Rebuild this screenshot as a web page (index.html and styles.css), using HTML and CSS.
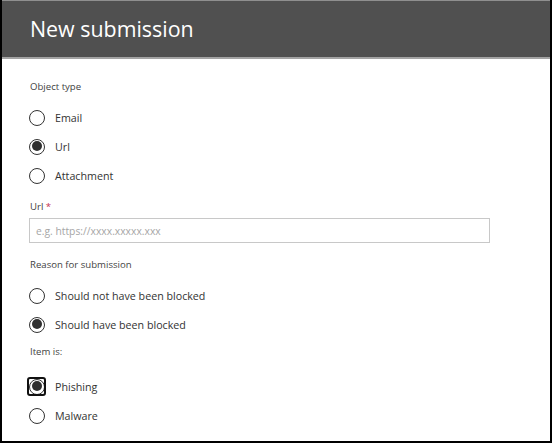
FILE: index.html
```html
<!DOCTYPE html>
<html lang="en">
<head>
<meta charset="utf-8">
<title>New submission</title>
<link rel="stylesheet" href="styles.css">
</head>
<body>
<div class="frame">
  <header class="header">
    <h1 class="title">New submission</h1>
  </header>
  <main class="content">
    <div class="label label-first">Object type</div>
    <div class="group">
      <div class="option"><span class="radio"></span><span class="option-text">Email</span></div>
      <div class="option"><span class="radio checked"></span><span class="option-text">Url</span></div>
      <div class="option"><span class="radio"></span><span class="option-text">Attachment</span></div>
    </div>
    <div class="label label-url">Url <span class="req">*</span></div>
    <div class="input"><span class="placeholder">e.g. https://xxxx.xxxxx.xxx</span></div>
    <div class="label label-reason">Reason for submission</div>
    <div class="group">
      <div class="option"><span class="radio"></span><span class="option-text">Should not have been blocked</span></div>
      <div class="option"><span class="radio checked"></span><span class="option-text">Should have been blocked</span></div>
    </div>
    <div class="label label-item">Item is:</div>
    <div class="group group-item">
      <div class="option"><span class="radio checked focused"></span><span class="option-text">Phishing</span></div>
      <div class="option"><span class="radio"></span><span class="option-text">Malware</span></div>
    </div>
  </main>
</div>
</body>
</html>
```

FILE: styles.css
```css
* { box-sizing: border-box; }
html, body { margin: 0; padding: 0; background: #ffffff; }
body { font-family: "Open Sans", "Noto Sans", sans-serif; color: #323130; }

.frame {
  width: 552px;
  height: 443px;
  border-left: 2px solid #000;
  border-right: 2px solid #000;
  border-bottom: 2px solid #000;
  overflow: hidden;
  background: #fff;
}

.header {
  height: 59px;
  background: #505050;
  border-top: 1px solid #8f8f8f;
  border-bottom: 2px solid #a3a3a3;
  display: flex;
  align-items: center;
  padding-left: 28px;
}
.title {
  margin: 0;
  font-size: 21.4px;
  font-weight: 400;
  color: #ffffff;
  line-height: 24px;
  padding-bottom: 1px;
}

.content { padding-left: 27px; }

.label {
  font-size: 9.6px;
  line-height: 16px;
  height: 16px;
  color: #3f3f3f;
  padding-left: 1px;
}
.label-first { margin-top: 20px; }
.label-url { margin-top: 9px; }
.label-reason { margin-top: 14px; }
.label-item { margin-top: 5px; }
.req { color: #c4314b; }

.group { margin-top: 8px; }
.group-item { margin-top: 12px; }

.option {
  height: 29px;
  display: flex;
  align-items: center;
}
.option-text {
  font-size: 10.7px;
  color: #333333;
  line-height: 14px;
}

.radio {
  position: relative;
  width: 16px;
  height: 16px;
  border: 1.4px solid #333333;
  border-radius: 50%;
  margin-right: 10px;
  flex: none;
  background: #fff;
}
.radio.checked::before {
  content: "";
  position: absolute;
  left: 1.6px;
  top: 1.6px;
  width: 10px;
  height: 10px;
  border-radius: 50%;
  background: #2f2f2f;
}
.radio.focused::after {
  content: "";
  position: absolute;
  left: -2.8px;
  top: -2.8px;
  width: 18.8px;
  height: 18.8px;
  border: 2px solid #111;
  border-radius: 3px;
  box-sizing: border-box;
}

.input {
  margin-top: 3px;
  width: 461px;
  height: 25px;
  border: 1px solid #c8c8c8;
  display: flex;
  align-items: center;
  padding-left: 6px;
}
.placeholder {
  font-size: 10.3px;
  color: #a6a6a6;
  line-height: 14px;
}
```
